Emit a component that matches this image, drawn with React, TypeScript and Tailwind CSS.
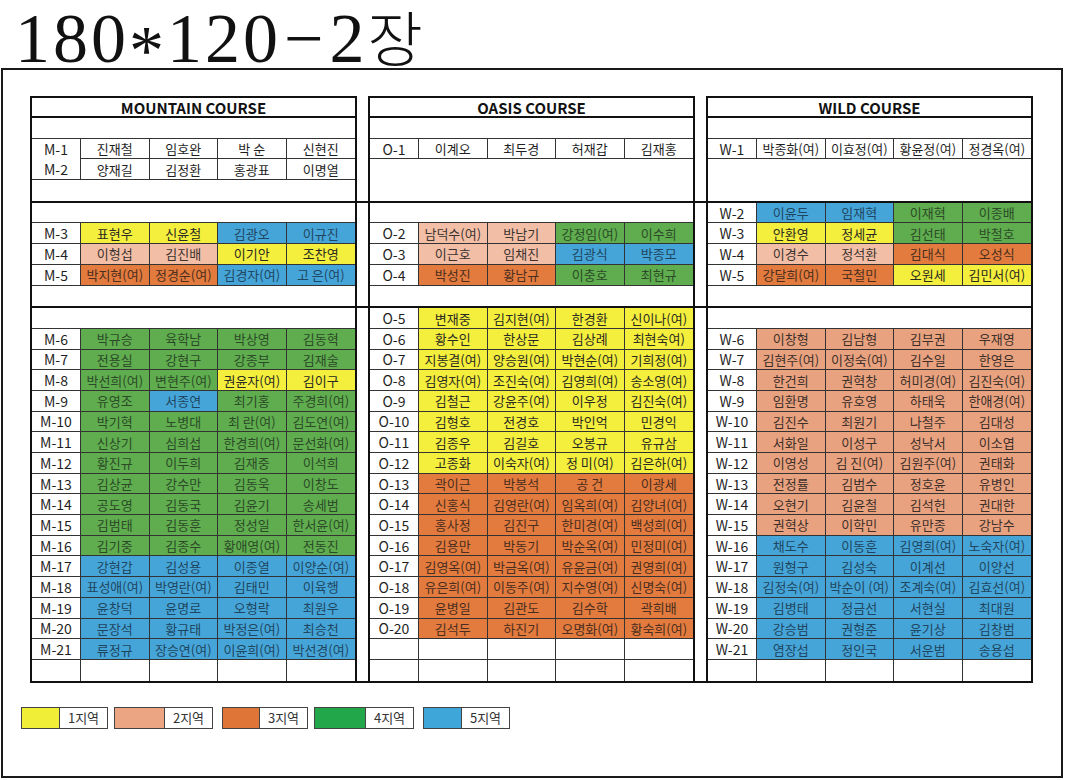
import clsx from 'clsx'

type Tone = 'W' | 'Y' | 'P' | 'S' | 'O' | 'G' | 'B'

const TONE: Record<Tone, string> = {
  W: 'bg-white text-[#1f1f1f]',
  Y: 'bg-[#f4ee3c] text-[#2a2a22]',
  P: 'bg-[#f3bea6] text-[#3a3330]',
  S: 'bg-[#e9a27f] text-[#3d302a]',
  O: 'bg-[#e27b3d] text-[#4a2e20]',
  G: 'bg-[#5fad4e] text-[#2c4a28]',
  B: 'bg-[#46a5d8] text-[#1f4660]',
}

type Row =
  | { kind: 'blank' }
  | { kind: 'merged' }
  | { kind: 'grid' }
  | { kind: 'data'; label: string; names: string[]; tones: Tone[]; join?: boolean }

const blank: Row = { kind: 'blank' }
const merged: Row = { kind: 'merged' }
const grid: Row = { kind: 'grid' }

function d(label: string, names: string, tones: string, join = false): Row {
  return { kind: 'data', label, names: names.split('|'), tones: tones.split('') as Tone[], join }
}

const COURSES: { title: string; bands: Row[][] }[] = [
  {
    title: 'MOUNTAIN COURSE',
    bands: [
      [blank, d('M-1', '진재철|임호완|박 순|신현진', 'WWWW', true), d('M-2', '양재길|김정환|홍광표|이명열', 'WWWW'), blank],
      [
        blank,
        d('M-3', '표현우|신윤철|김광오|이규진', 'YYBB'),
        d('M-4', '이형섭|김진배|이기안|조찬영', 'PPYY'),
        d('M-5', '박지현(여)|정경순(여)|김경자(여)|고 은(여)', 'OOBB'),
        blank,
      ],
      [
        blank,
        d('M-6', '박규승|육학남|박상영|김동혁', 'GGGG'),
        d('M-7', '전용실|강현구|강종부|김재술', 'GGGG'),
        d('M-8', '박선희(여)|변현주(여)|권윤자(여)|김이구', 'GGYY'),
        d('M-9', '유영조|서종연|최기홍|주경희(여)', 'GBGG'),
        d('M-10', '박기혁|노병대|최 란(여)|김도연(여)', 'GGGG'),
        d('M-11', '신상기|심희섭|한경희(여)|문선화(여)', 'GGGG'),
        d('M-12', '황진규|이두희|김재중|이석희', 'GGGG'),
        d('M-13', '김상균|강수만|김동욱|이창도', 'GGGG'),
        d('M-14', '공도영|김동국|김윤기|송세범', 'GGGG'),
        d('M-15', '김범태|김동훈|정성일|한서윤(여)', 'GGGG'),
        d('M-16', '김기중|김종수|황애영(여)|전동진', 'GGGG'),
        d('M-17', '강현갑|김성용|이종열|이양순(여)', 'BBBB'),
        d('M-18', '표성애(여)|박영란(여)|김태민|이육행', 'BBBB'),
        d('M-19', '윤창덕|윤명로|오형락|최원우', 'BBBB'),
        d('M-20', '문장석|황규태|박정은(여)|최승천', 'BBBB'),
        d('M-21', '류정규|장승연(여)|이윤희(여)|박선경(여)', 'BBBB'),
        grid,
      ],
    ],
  },
  {
    title: 'OASIS COURSE',
    bands: [
      [blank, d('O-1', '이계오|최두경|허재갑|김재홍', 'WWWW'), merged],
      [
        blank,
        d('O-2', '남덕수(여)|박남기|강정임(여)|이수희', 'PPGG'),
        d('O-3', '이근호|임채진|김광식|박종모', 'PPBB'),
        d('O-4', '박성진|황남규|이충호|최현규', 'OOGG'),
        blank,
      ],
      [
        d('O-5', '변재중|김지현(여)|한경환|신이나(여)', 'YYYY'),
        d('O-6', '황수인|한상문|김상례|최현숙여)', 'YYYY'),
        d('O-7', '지봉결(여)|양승원(여)|박현순(여)|기희정(여)', 'YYYY'),
        d('O-8', '김영자(여)|조진숙(여)|김영희(여)|송소영(여)', 'YYYY'),
        d('O-9', '김철근|강윤주(여)|이우정|김진숙(여)', 'YYYY'),
        d('O-10', '김형호|전경호|박인억|민경익', 'YYYY'),
        d('O-11', '김종우|김길호|오봉규|유규삼', 'YYYY'),
        d('O-12', '고종화|이숙자(여)|정 미(여)|김은하(여)', 'YYYY'),
        d('O-13', '곽이근|박봉석|공 건|이광세', 'OOOO'),
        d('O-14', '신홍식|김영란(여)|임옥희(여)|김양녀(여)', 'OOOO'),
        d('O-15', '홍사정|김진구|한미경(여)|백성희(여)', 'OOOO'),
        d('O-16', '김용만|박동기|박순옥(여)|민정미(여)', 'OOOO'),
        d('O-17', '김영옥(여)|박금옥(여)|유윤금(여)|권영희(여)', 'OOOO'),
        d('O-18', '유은희(여)|이동주(여)|지수영(여)|신명숙(여)', 'OOOO'),
        d('O-19', '윤병일|김관도|김수학|곽희배', 'OOOO'),
        d('O-20', '김석두|하진기|오명화(여)|황숙희(여)', 'OOOO'),
        grid,
        grid,
      ],
    ],
  },
  {
    title: 'WILD COURSE',
    bands: [
      [blank, d('W-1', '박종화(여)|이효정(여)|황윤정(여)|정경옥(여)', 'WWWW'), merged],
      [
        d('W-2', '이윤두|임재혁|이재혁|이종배', 'BBGG'),
        d('W-3', '안환영|정세균|김선태|박철호', 'YYGG'),
        d('W-4', '이경수|정석환|김대식|오성식', 'PPOO'),
        d('W-5', '강달희(여)|국철민|오원세|김민서(여)', 'OOYY'),
        blank,
      ],
      [
        blank,
        d('W-6', '이창형|김남형|김부권|우재영', 'SSSS'),
        d('W-7', '김현주(여)|이정숙(여)|김수일|한영은', 'SSSS'),
        d('W-8', '한건희|권혁창|허미경(여)|김진숙(여)', 'SSSS'),
        d('W-9', '임환명|유호영|하태욱|한애경(여)', 'SSSS'),
        d('W-10', '김진수|최원기|나철주|김대성', 'SSSS'),
        d('W-11', '서화일|이성구|성낙서|이소엽', 'SSSS'),
        d('W-12', '이영성|김 진(여)|김원주(여)|권태화', 'SSSS'),
        d('W-13', '전정률|김범수|정호윤|유병인', 'SSSS'),
        d('W-14', '오현기|김윤철|김석헌|권대한', 'SSSS'),
        d('W-15', '권혁상|이학민|유만종|강남수', 'SSSS'),
        d('W-16', '채도수|이동훈|김영희(여)|노숙자(여)', 'BBBB'),
        d('W-17', '원형구|김성숙|이계선|이양선', 'BBBB'),
        d('W-18', '김정숙(여)|박순이 (여)|조계숙(여)|김효선(여)', 'BBBB'),
        d('W-19', '김병태|정금선|서현실|최대원', 'BBBB'),
        d('W-20', '강승범|권형준|윤기상|김창범', 'BBBB'),
        d('W-21', '염장섭|정인국|서운범|송용섭', 'BBBB'),
        grid,
      ],
    ],
  },
]

const LEGEND = [
  { label: '1지역', swatch: 'w-[37px] bg-[#f1ee38]', gap: '' },
  { label: '2지역', swatch: 'w-[49px] bg-[#eba583]', gap: 'ml-[6px]' },
  { label: '3지역', swatch: 'w-[36px] bg-[#e07538]', gap: 'ml-[9px]' },
  { label: '4지역', swatch: 'w-[50px] bg-[#22a84b]', gap: 'ml-[6px]' },
  { label: '5지역', swatch: 'w-[37px] bg-[#3fa6da]', gap: 'ml-[9px]' },
]

function TableRow({ row, last }: { row: Row; last: boolean }) {
  if (row.kind === 'blank') {
    return <div className={clsx('h-[20.7px]', !last && 'border-b border-[#333]')} />
  }
  if (row.kind === 'merged') return <div className="h-[41.4px]" />

  const cells = row.kind === 'grid' ? ['', '', '', '', ''] : [row.label, ...row.names]
  return (
    <div className="grid h-[20.7px] grid-cols-[49px_1fr_1fr_1fr_1fr]">
      {cells.map((text, i) => {
        const tone = row.kind === 'data' && i > 0 ? TONE[row.tones[i - 1]] : TONE.W
        const open = last || (row.kind === 'data' && i === 0 && row.join)
        return (
          <div
            key={i}
            className={clsx(
              'flex items-center justify-center overflow-hidden whitespace-nowrap leading-none',
              tone,
              i < 4 && 'border-r border-[#333]',
              !open && 'border-b border-[#333]',
              i === 0 ? 'text-[14px]' : 'text-[13px]',
            )}
          >
            {text}
          </div>
        )
      })}
    </div>
  )
}

function Segment({ title, rows }: { title?: string; rows: Row[] }) {
  return (
    <div className="w-[327px] border-x-2 border-[#111]">
      {title && (
        <div className="flex h-[22px] items-center justify-center border-y-2 border-[#111] text-[15px] font-bold leading-none text-[#111]">
          {title}
        </div>
      )}
      {rows.map((r, i) => (
        <TableRow key={i} row={r} last={i === rows.length - 1} />
      ))}
    </div>
  )
}

export default function App() {
  return (
    <div className="h-[780px] w-[1065px] overflow-hidden bg-white">
      {/* title */}
      <div className="h-[68px] whitespace-nowrap pl-[15px] font-['Liberation_Serif','Noto_Sans_CJK_KR',serif] text-[70px] leading-[78px] tracking-[3px] text-[#111]">
        180<span className="align-[-12px]">*</span>120<span className="px-[3px]">−</span>2<span className="text-[60px] font-light">장</span>
      </div>

      {/* sheet */}
      <div className="ml-px h-[710px] w-[1062px] border-2 border-[#1a1a1a] pl-[18px] pt-[26px] font-['Noto_Sans_CJK_KR',sans-serif]">
        <div className="ml-[9px] w-[1003px]">
          {[0, 1, 2].map((b) => (
            <div key={b} className="flex gap-[11px] border-b-2 border-[#111]">
              {COURSES.map((c) => (
                <Segment key={c.title} title={b === 0 ? c.title : undefined} rows={c.bands[b]} />
              ))}
            </div>
          ))}
        </div>

        {/* legend */}
        <div className="mt-[24px] flex">
          {LEGEND.map((l) => (
            <div key={l.label} className={clsx('flex h-[22px] border border-[#444]', l.gap)}>
              <div className={l.swatch} />
              <div className="flex w-[48px] items-center justify-center border-l border-[#444] text-[13px] leading-none text-[#333]">
                {l.label}
              </div>
            </div>
          ))}
        </div>
      </div>
    </div>
  )
}
